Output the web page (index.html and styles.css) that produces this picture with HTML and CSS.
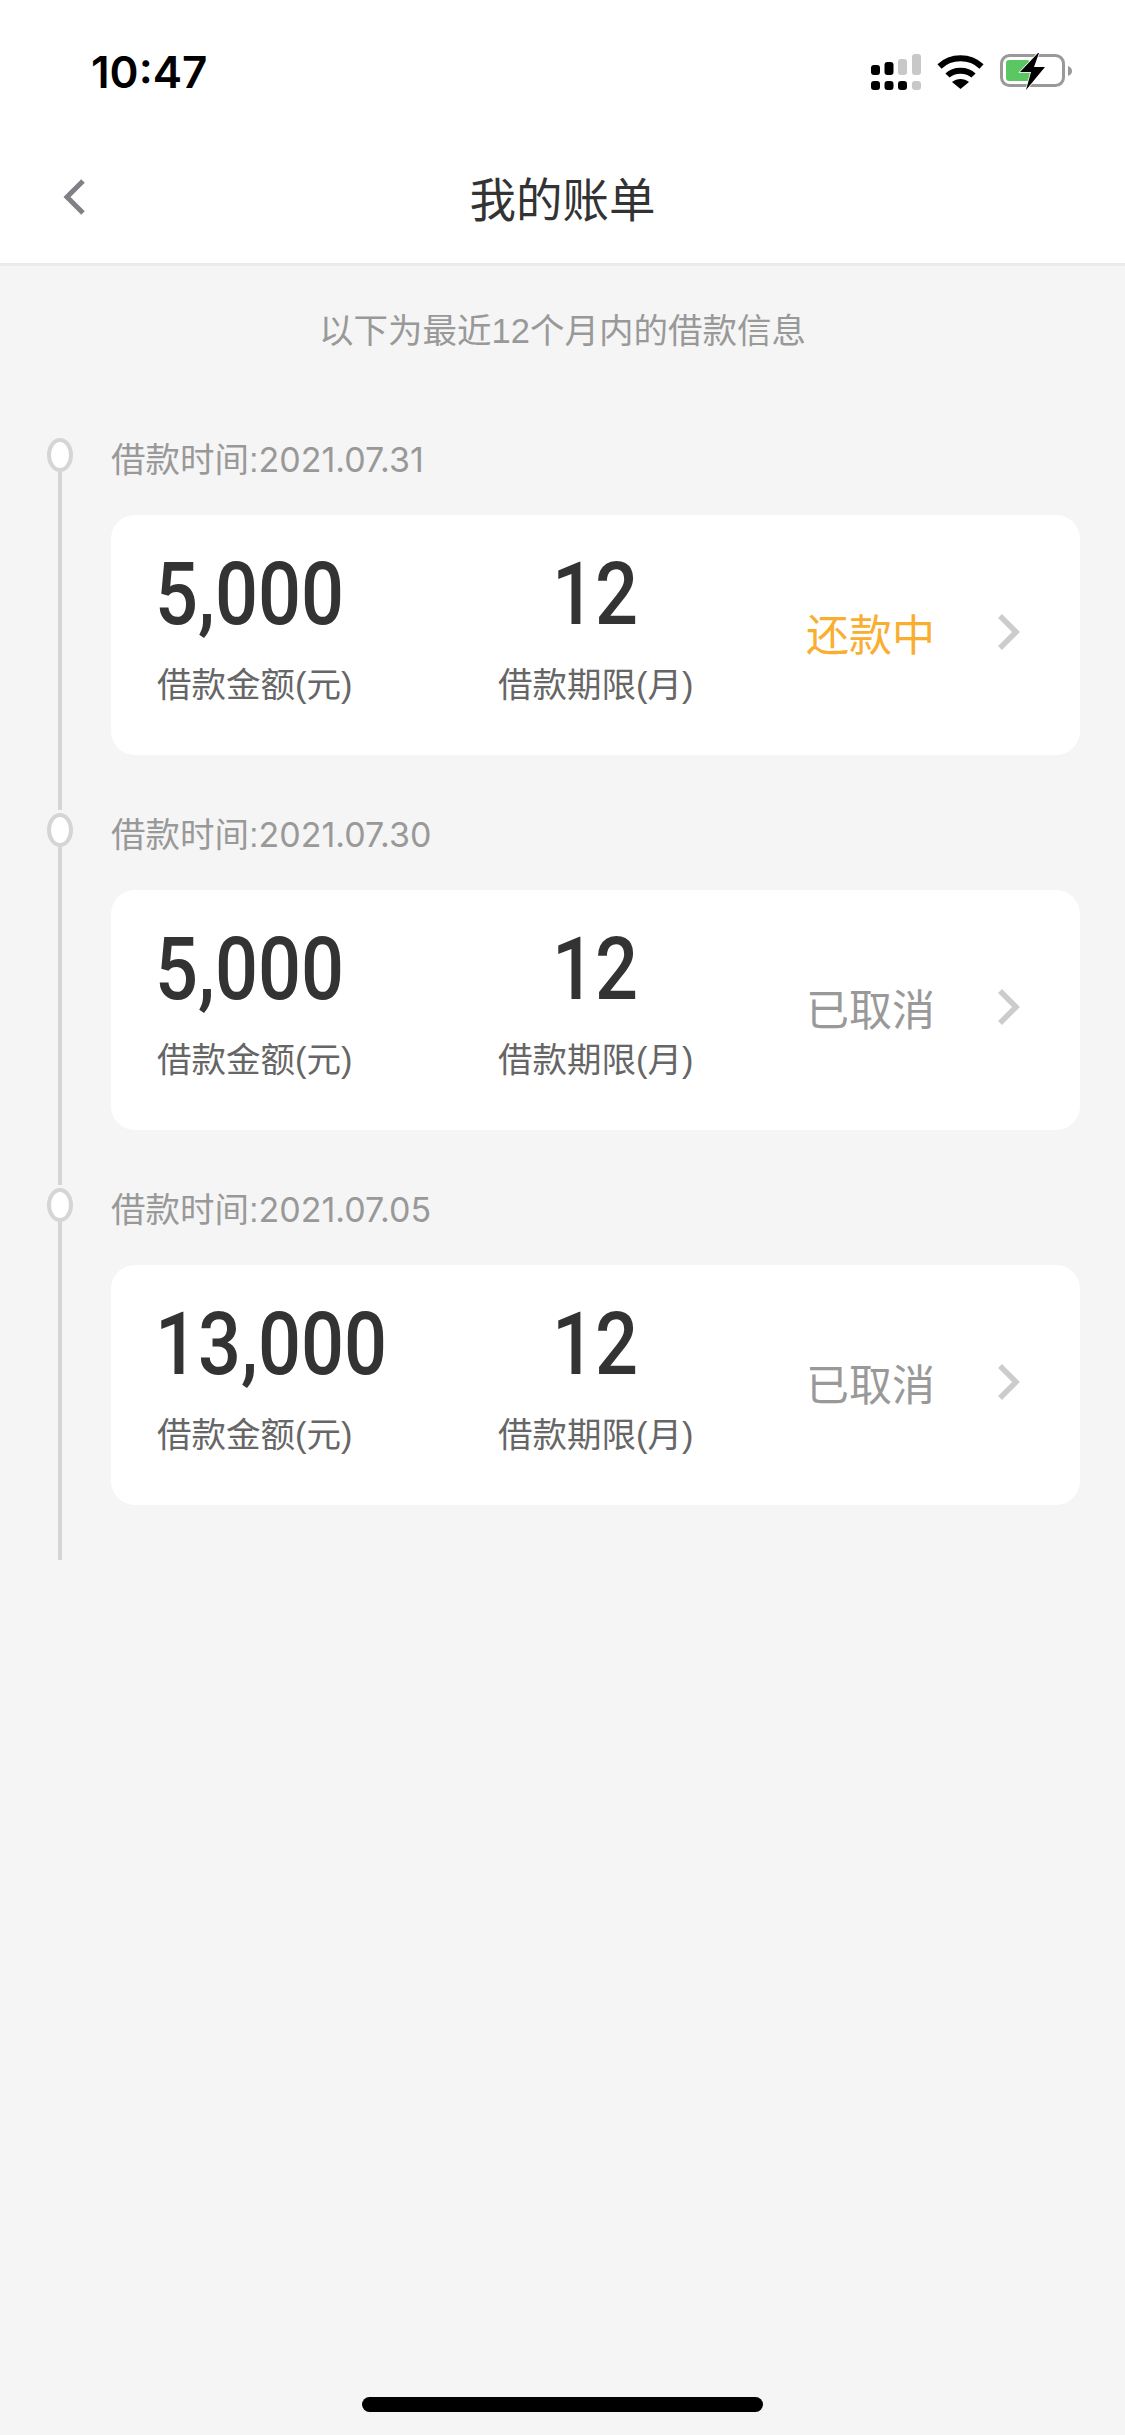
FILE: index.html
```html
<!DOCTYPE html>
<html lang="zh-CN">
<head>
    <meta charset="UTF-8">
    <meta name="viewport" content="width=device-width, initial-scale=1.0">
    <title>我的账单</title>
    <link rel="stylesheet" href="styles.css">
</head>
<body>

<header class="top">
    <div class="status-bar">
        <span class="time">10:47</span>
        <div class="status-icons">
            <svg class="icon-signal" width="50" height="36" viewBox="0 0 50 36">
                <rect x="0" y="11" width="9" height="10" rx="3" fill="#000"/>
                <rect x="13.5" y="8" width="9" height="13" rx="3" fill="#000"/>
                <rect x="27" y="5" width="9" height="16" rx="3" fill="#c8c8c8"/>
                <rect x="41" y="0" width="9" height="21" rx="3" fill="#c8c8c8"/>
                <rect x="0" y="27" width="9" height="9" rx="3" fill="#000"/>
                <rect x="13.5" y="27" width="9" height="9" rx="3" fill="#000"/>
                <rect x="27" y="27" width="9" height="9" rx="3" fill="#000"/>
                <rect x="41" y="27" width="9" height="9" rx="3" fill="#c8c8c8"/>
            </svg>
            <svg class="icon-wifi" width="47" height="34" viewBox="0 0 47 34">
                <path d="M2.5 11.5C14 .5 33 .5 44.5 11.5" fill="none" stroke="#000" stroke-width="6"/>
                <path d="M10.5 20.5C17 14 30 14 36.5 20.5" fill="none" stroke="#000" stroke-width="6"/>
                <path d="M15 27C20 23 27 23 32 27L23.5 34Z" fill="#000"/>
            </svg>
            <svg class="icon-battery" width="73" height="37" viewBox="0 0 73 37">
                <rect x="1.5" y="2.5" width="62" height="30" rx="8" fill="none" stroke="#999" stroke-width="3"/>
                <path d="M68 13C71 14 72 16 72 18C72 20 71 22 68 23Z" fill="#999"/>
                <rect x="6" y="7" width="24" height="21" rx="3" fill="#5ac763"/>
                <path d="M38 0L20 19H31L26 37L45 14H34L39 0Z" fill="#000" stroke="#fff" stroke-width="1.5" paint-order="stroke"/>
            </svg>
        </div>
    </div>
    <nav class="nav-bar">
        <svg class="back" width="23" height="36" viewBox="0 0 23 36">
            <path d="M20 2L4 18L20 34" fill="none" stroke="#808086" stroke-width="5"/>
        </svg>
        <h1 class="nav-title">我的账单</h1>
    </nav>
</header>

<main class="content">
    <p class="tip">以下为最近12个月内的借款信息</p>

    <div class="timeline">
        <section class="item">
            <div class="rail"><span class="dot"></span><span class="line"></span></div>
            <div class="body">
                <div class="date">借款时间:<span class="date-num">2021.07.31</span></div>
                <div class="card">
                    <div class="col-amount">
                        <div class="num">5,000</div>
                        <div class="label">借款金额(元)</div>
                    </div>
                    <div class="col-term">
                        <div class="num">12</div>
                        <div class="label">借款期限(月)</div>
                    </div>
                    <div class="col-status">
                        <span class="status status-active">还款中</span>
                        <svg class="arrow" width="22" height="36" viewBox="0 0 22 36">
                            <path d="M2 2L18 18L2 34" fill="none" stroke="#ccc" stroke-width="5.5"/>
                        </svg>
                    </div>
                </div>
            </div>
        </section>

        <section class="item">
            <div class="rail"><span class="dot"></span><span class="line"></span></div>
            <div class="body">
                <div class="date">借款时间:<span class="date-num">2021.07.30</span></div>
                <div class="card">
                    <div class="col-amount">
                        <div class="num">5,000</div>
                        <div class="label">借款金额(元)</div>
                    </div>
                    <div class="col-term">
                        <div class="num">12</div>
                        <div class="label">借款期限(月)</div>
                    </div>
                    <div class="col-status">
                        <span class="status">已取消</span>
                        <svg class="arrow" width="22" height="36" viewBox="0 0 22 36">
                            <path d="M2 2L18 18L2 34" fill="none" stroke="#ccc" stroke-width="5.5"/>
                        </svg>
                    </div>
                </div>
            </div>
        </section>

        <section class="item">
            <div class="rail"><span class="dot"></span><span class="line"></span></div>
            <div class="body">
                <div class="date">借款时间:<span class="date-num">2021.07.05</span></div>
                <div class="card">
                    <div class="col-amount">
                        <div class="num">13,000</div>
                        <div class="label">借款金额(元)</div>
                    </div>
                    <div class="col-term">
                        <div class="num">12</div>
                        <div class="label">借款期限(月)</div>
                    </div>
                    <div class="col-status">
                        <span class="status">已取消</span>
                        <svg class="arrow" width="22" height="36" viewBox="0 0 22 36">
                            <path d="M2 2L18 18L2 34" fill="none" stroke="#ccc" stroke-width="5.5"/>
                        </svg>
                    </div>
                </div>
            </div>
        </section>
    </div>
</main>

<div class="home-area"><span class="home-bar"></span></div>

</body>
</html>
```

FILE: styles.css
```css
html, body {
    height: 100%;
}
body {
    margin: 0;
    display: flex;
    flex-direction: column;
    height: 2435px;
    overflow: hidden;
    background-color: #f5f5f5;
    font-family: "Liberation Sans", "Noto Sans CJK SC", sans-serif;
}
.top {
    height: 263px;
    background-color: #fff;
    border-bottom: 3px solid #ebebeb;
}
.status-bar {
    display: flex;
    justify-content: space-between;
    align-items: center;
    height: 143px;
    padding: 0 52px 0 91px;
}
.time {
    font-family: Inter, sans-serif;
    font-size: 44px;
    font-weight: 600;
    color: #000;
}
.status-icons {
    display: flex;
    align-items: center;
    gap: 16px;
}
.nav-bar {
    display: flex;
    align-items: center;
    justify-content: center;
    position: relative;
    height: 106px;
}
.back {
    position: absolute;
    left: 63px;
    top: 36px;
}
.nav-title {
    margin: 0;
    font-size: 46.5px;
    font-weight: 400;
    color: #333;
}
.content {
    flex: 1;
}
.tip {
    margin: 0;
    padding-top: 44px;
    line-height: 42px;
    text-align: center;
    font-size: 34.5px;
    color: #999;
}
.timeline {
    margin-top: 86px;
}
.item {
    display: flex;
    height: 372px;
    margin-bottom: 3px;
}
.rail {
    display: flex;
    flex-direction: column;
    align-items: center;
    width: 26px;
    margin: 0 38px 0 47px;
}
.dot {
    width: 26px;
    height: 34px;
    box-sizing: border-box;
    border: 4px solid #d5d5d5;
    border-radius: 50%;
    background-color: #fff;
}
.line {
    flex: 1;
    width: 4px;
    background-color: #d5d5d5;
}
.body {
    flex: 1;
    margin-right: 45px;
}
.date {
    line-height: 44px;
    margin-bottom: 33px;
    font-size: 34.5px;
    color: #999;
}
/* digits in the date are proportional, the 1 is narrow */
.date-num {
    font-family: Inter, sans-serif;
    font-size: 34px;
}
.card {
    display: grid;
    grid-template-columns: 341px 195px 1fr;
    height: 240px;
    box-sizing: border-box;
    padding: 29px 0 0 46px;
    border-radius: 24px;
    background-color: #fff;
}
.col-term {
    text-align: center;
}
.num {
    display: inline-block;
    line-height: 100px;
    font-family: Roboto, sans-serif;
    font-size: 88px;
    font-weight: 500;
    color: #333;
    transform: scaleX(0.86);
    transform-origin: left center;
}
.col-amount .num {
    margin-left: -2px;
}
.col-term .num {
    transform-origin: center;
}
.label {
    margin-top: 16px;
    line-height: 50px;
    font-size: 34.5px;
    white-space: nowrap;
    color: #666;
}
.col-status {
    display: flex;
    align-items: center;
    gap: 63px;
    height: 176px;
    margin-left: 113px;
}
.status {
    font-size: 43px;
    white-space: nowrap;
    color: #999;
}
.status-active {
    color: #f9ae2f;
}
.home-area {
    display: flex;
    justify-content: center;
    padding-bottom: 23px;
}
.home-bar {
    width: 401px;
    height: 15px;
    border-radius: 8px;
    background-color: #000;
}
```
